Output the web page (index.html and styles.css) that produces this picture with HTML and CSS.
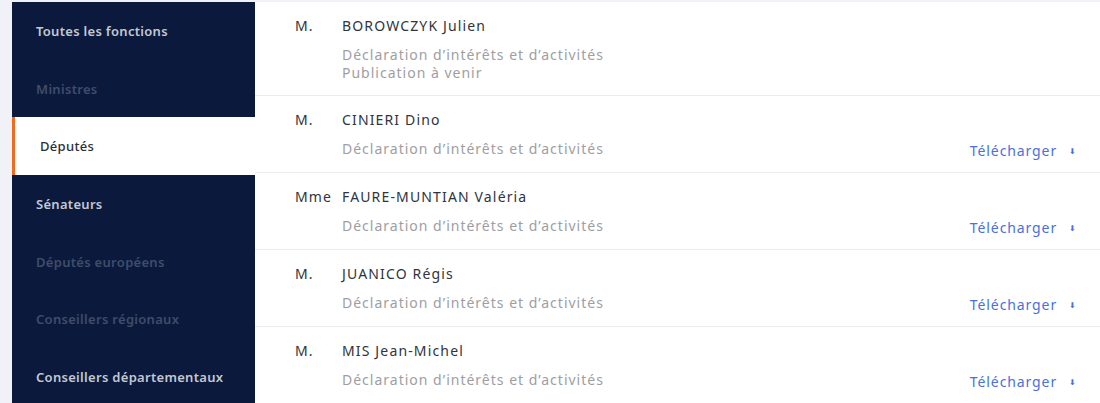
FILE: index.html
```html
<!DOCTYPE html>
<html lang="fr">
<head>
<meta charset="utf-8">
<link rel="stylesheet" href="styles.css">
</head>
<body>
<div class="page">
  <nav class="sidebar">
    <a class="nav-item light">Toutes les fonctions</a>
    <a class="nav-item dim">Ministres</a>
    <a class="nav-item active">Députés</a>
    <a class="nav-item light">Sénateurs</a>
    <a class="nav-item dim">Députés européens</a>
    <a class="nav-item dim">Conseillers régionaux</a>
    <a class="nav-item light">Conseillers départementaux</a>
  </nav>
  <main class="list">
    <div class="row first">
      <div class="civ">M.</div>
      <div class="info">
        <div class="name">BOROWCZYK Julien</div>
        <div class="desc">Déclaration d’intérêts et d’activités</div>
        <div class="desc">Publication à venir</div>
      </div>
    </div>
    <div class="row">
      <div class="civ">M.</div>
      <div class="info">
        <div class="name">CINIERI Dino</div>
        <div class="desc">Déclaration d’intérêts et d’activités</div>
      </div>
      <a class="dl">Télécharger <span class="arrow">&#x2B07;</span></a>
    </div>
    <div class="row">
      <div class="civ">Mme</div>
      <div class="info">
        <div class="name">FAURE-MUNTIAN Valéria</div>
        <div class="desc">Déclaration d’intérêts et d’activités</div>
      </div>
      <a class="dl">Télécharger <span class="arrow">&#x2B07;</span></a>
    </div>
    <div class="row">
      <div class="civ">M.</div>
      <div class="info">
        <div class="name">JUANICO Régis</div>
        <div class="desc">Déclaration d’intérêts et d’activités</div>
      </div>
      <a class="dl">Télécharger <span class="arrow">&#x2B07;</span></a>
    </div>
    <div class="row">
      <div class="civ">M.</div>
      <div class="info">
        <div class="name">MIS Jean-Michel</div>
        <div class="desc">Déclaration d’intérêts et d’activités</div>
      </div>
      <a class="dl">Télécharger <span class="arrow">&#x2B07;</span></a>
    </div>
  </main>
</div>
</body>
</html>
```
FILE: styles.css
```css
* { box-sizing: border-box; }
html, body { margin: 0; padding: 0; }
body {
  background: #f1f2f7;
  font-family: "Noto Sans", "Liberation Sans", sans-serif;
  height: 403px;
  overflow: hidden;
}
.page {
  display: flex;
  padding-top: 2px;
}
.sidebar {
  margin-left: 12px;
  width: 243px;
  background: #0b1a3c;
  display: flex;
  flex-direction: column;
}
.nav-item {
  display: flex;
  align-items: center;
  height: 57.7px;
  padding-left: 24px;
  font-size: 13px;
  font-weight: 600;
  letter-spacing: 0.3px;
}
.nav-item.light { color: #c3c8d3; }
.nav-item.dim { color: #3f4c6b; }
.nav-item.active {
  background: #fff;
  color: #2a2e38;
  font-weight: 500;
  padding-left: 25px;
  border-left: 3px solid #ef6a1f;
}
.list {
  flex: 1;
  background: #fff;
}
.row {
  display: flex;
  height: 77px;
  border-bottom: 1px solid #ececef;
  padding-left: 40px;
  padding-top: 15px;
}
.row.first { height: 94px; }
.civ {
  width: 47px;
  font-size: 14px;
  color: #2f3440;
  letter-spacing: 1.1px;
  line-height: 18px;
}
.info { flex: 1; }
.name {
  font-size: 14px;
  color: #2f3440;
  letter-spacing: 1.15px;
  line-height: 18px;
  margin-bottom: 11px;
}
.desc {
  font-size: 14px;
  color: #9e9ea2;
  letter-spacing: 1px;
  line-height: 18px;
}
.dl {
  align-self: flex-end;
  margin-bottom: 12px;
  margin-right: 23px;
  font-size: 14px;
  color: #4a6fe0;
  letter-spacing: 0.9px;
  display: flex;
  align-items: center;
}
.arrow {
  font-size: 8px;
  margin-left: 12px;
}
```
